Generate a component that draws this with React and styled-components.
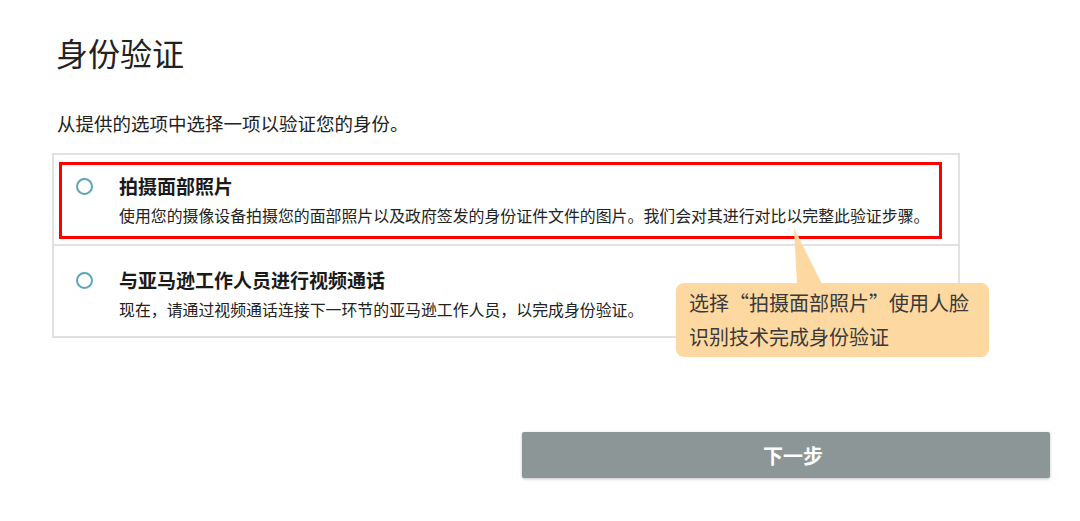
import React from 'react'
import styled, { createGlobalStyle } from 'styled-components'

const GlobalStyle = createGlobalStyle`
    body {
        margin: 0;
        background: #fff;
        font-family: 'Noto Sans CJK SC', 'Noto Sans', sans-serif;
        color: #222;
    }
`

const Page = styled.main`
    width: 1080px;
    height: 521px;
    box-sizing: border-box;
    padding: 33px 0 0 52px;
    overflow: hidden;
`

const Title = styled.h1`
    margin: 0 0 0 4px;
    font-size: 32px;
    line-height: 38px;
    font-weight: 400;
    color: #222;
`

const Lead = styled.p`
    margin: 39px 0 0 5px;
    font-size: 18.5px;
    line-height: 26px;
    color: #222;
`

const Options = styled.div`
    position: relative;
    margin-top: 17px;
    width: 908px;
    box-sizing: border-box;
    border: 2px solid #e1e1e1;
`

const OptionRow = styled.div`
    padding: ${p => (p.$first ? '7px 16px 5px 5px' : '21px 0 15px 22px')};
    & + & {
        border-top: 2px solid #e1e1e1;
    }
`

const Highlight = styled.div`
    border: 3px solid #ff0000;
    padding: 8px 0 9px 14px;
`

const OptionBody = styled.div`
    display: flex;
    align-items: flex-start;
    gap: 26px;
`

const Radio = styled.span`
    flex: none;
    width: 17px;
    height: 17px;
    margin-top: 5px;
    box-sizing: border-box;
    border-radius: 50%;
    border: 2.5px solid #5aa6b7;
    background: #fff;
`

const Texts = styled.div`
    display: flex;
    flex-direction: column;
    gap: 6px;
`

const OptionTitle = styled.div`
    font-size: 19px;
    line-height: 26px;
    font-weight: 700;
    color: #1a1a1a;
`

const OptionDesc = styled.div`
    font-size: 15.9px;
    line-height: 22px;
    color: #222;
`

const Tip = styled.div`
    position: absolute;
    left: 622px;
    top: 128px;
    width: 313px;
    height: 74px;
    box-sizing: border-box;
    padding: 3px 13px;
    border-radius: 8px;
    background: #fdd9a1;
    color: #3a3a3a;
    font-size: 20px;
    line-height: 34px;
    &::before {
        content: '';
        position: absolute;
        left: 118px;
        top: -55px;
        width: 28px;
        height: 56px;
        background: #fdd9a1;
        clip-path: polygon(0 0, 3px 100%, 100% 100%);
    }
`

const NextButton = styled.button`
    display: block;
    margin: 94px 0 0 470px;
    width: 528px;
    height: 46px;
    padding: 0 0 0 14px;
    border: none;
    border-radius: 2px;
    background: #8c9696;
    box-shadow: 0 1px 3px rgba(0, 0, 0, 0.25);
    color: #fff;
    font-family: inherit;
    font-size: 20px;
    font-weight: 700;
    cursor: pointer;
`

const Option = ({ title, desc }) => (
    <OptionBody>
        <Radio />
        <Texts>
            <OptionTitle>{title}</OptionTitle>
            <OptionDesc>{desc}</OptionDesc>
        </Texts>
    </OptionBody>
)

const App = () => {
    return (
        <Page>
            <GlobalStyle />
            <Title>身份验证</Title>
            <Lead>从提供的选项中选择一项以验证您的身份。</Lead>
            <Options>
                <OptionRow $first>
                    <Highlight>
                        <Option
                            title="拍摄面部照片"
                            desc="使用您的摄像设备拍摄您的面部照片以及政府签发的身份证件文件的图片。我们会对其进行对比以完整此验证步骤。"
                        />
                    </Highlight>
                </OptionRow>
                <OptionRow>
                    <Option
                        title="与亚马逊工作人员进行视频通话"
                        desc="现在，请通过视频通话连接下一环节的亚马逊工作人员，以完成身份验证。"
                    />
                </OptionRow>
                <Tip>
                    选择“拍摄面部照片”使用人脸
                    <br />
                    识别技术完成身份验证
                </Tip>
            </Options>
            <NextButton>下一步</NextButton>
        </Page>
    )
}

export default App
